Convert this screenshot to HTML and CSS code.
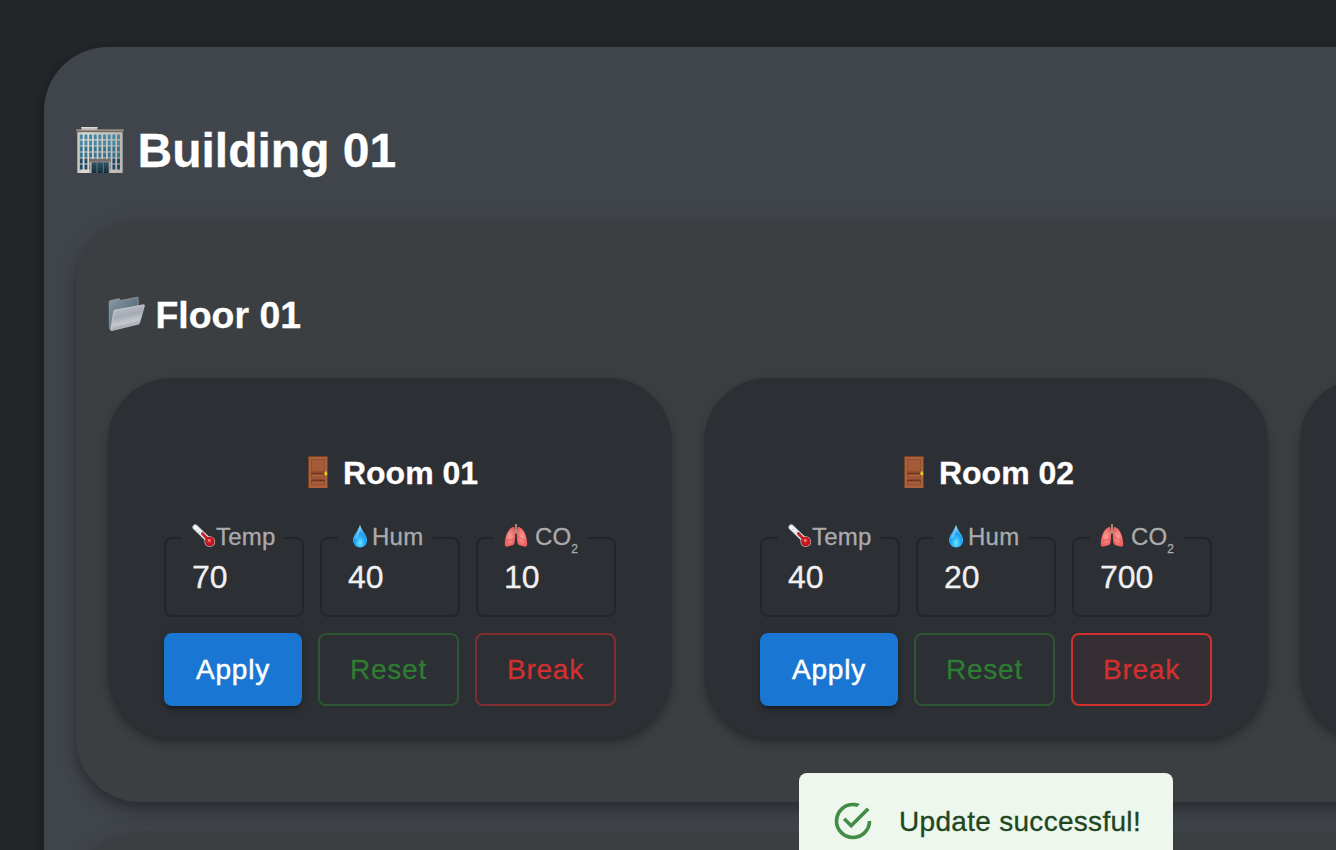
FILE: index.html
```
<!DOCTYPE html>
<html lang="en">
<head>
<meta charset="utf-8">
<title>Building 01</title>
<link rel="stylesheet" href="styles.css">
</head>
<body>
<svg class="defs" width="0" height="0" aria-hidden="true">
  <defs>
    <linearGradient id="wall" x2="1" y2="0"><stop offset="0" stop-color="#c9c5bf"/><stop offset=".15" stop-color="#dedad4"/><stop offset="1" stop-color="#bbb6b0"/></linearGradient>
    <linearGradient id="glass" x2="0" y2="1"><stop offset="0" stop-color="#2f5468"/><stop offset="1" stop-color="#172e3d"/></linearGradient>
    <linearGradient id="folder" x2=".3" y2="1"><stop offset="0" stop-color="#c5c9d0"/><stop offset=".5" stop-color="#a5abb4"/><stop offset=".75" stop-color="#c5c8ce"/><stop offset="1" stop-color="#949aa3"/></linearGradient>
    <linearGradient id="back" x2="1" y2="1"><stop offset="0" stop-color="#8a9aa7"/><stop offset="1" stop-color="#435764"/></linearGradient>
    <radialGradient id="water" cx=".5" cy=".8" r=".75"><stop offset="0" stop-color="#6fe6ff"/><stop offset=".3" stop-color="#35bdfa"/><stop offset=".55" stop-color="#1a9df2"/><stop offset="1" stop-color="#a9e3ff"/></radialGradient>
    <radialGradient id="lobe"><stop offset="0" stop-color="#ff9c96"/><stop offset="1" stop-color="#e9605f"/></radialGradient>
    <radialGradient id="bulb" cx=".45" cy=".4"><stop offset="0" stop-color="#ff6a6a"/><stop offset=".5" stop-color="#d31c25"/><stop offset="1" stop-color="#b3121c"/></radialGradient>
    <symbol id="door" viewBox="0 0 20 32">
      <rect width="20" height="32" fill="#714027"/><rect x="1" y="1" width="18" height="31" fill="#ad603c"/>
      <path d="M3.5 3.5h13v12h-13zM3.5 18h13v4h-13zM3.5 25h13v4h-13z" fill="#a65a37" stroke="#8b4c30" stroke-width=".8"/>
      <path d="M3 17.3h14M3 24.3h14" stroke="#6a3422" stroke-width="1.5"/>
      <rect x="17" y="15" width="2" height="5" fill="#c99b19"/><path d="M16.2 17.5h3" stroke="#f5d52d" stroke-width="1.8"/>
    </symbol>
    <symbol id="thermometer" viewBox="0 0 24 24">
      <path d="M3.3 3.3L16 15.5" stroke="#c5d1d6" stroke-width="5.6" stroke-linecap="round"/><path d="M3.3 3.3L16 15.5" stroke="#eff7f8" stroke-width="3.8" stroke-linecap="round"/>
      <circle cx="17.8" cy="17.5" r="5.3" fill="#dadfe2"/><circle cx="17.8" cy="17.5" r="4.8" fill="url(#bulb)"/>
      <path d="M10.3 9.5l6.5 7" stroke="#cb1a24" stroke-width="2.8" stroke-linecap="round"/>
      <path d="M4 6.5l1.5-1.5M6.5 9l1.5-1.5M9 11.5l1.3-1.3" stroke="#8da0a9" stroke-width=".8"/><circle cx="17" cy="16.4" r="1.1" fill="#ff9a97"/>
    </symbol>
    <symbol id="drop" viewBox="0 0 24 24">
      <path d="M12 .8C10.8 6.4 5 11.2 5 16.4a7.1 7.1 0 0 0 14.2 0C19.2 11.2 13.2 6.4 12 .8z" fill="url(#water)"/>
      <path d="M11.9 4C11 8 7.2 11.5 6.9 15c2.5-1 5-5 5-11z" fill="#c9efff" opacity=".45"/>
    </symbol>
    <symbol id="lungs" viewBox="0 0 24 24">
      <path d="M9.8 2.8C5 3.8 1 11 .8 19.5c0 3.3 1.2 3.6 3.8 2.7 2.8-.8 5.3-.7 5.9-3.2.8-4.5 1.3-14.8-.7-16.2z" fill="url(#lobe)"/>
      <path d="M14.2 2.8C19 3.8 23 11 23.2 19.5c0 3.3-1.2 3.6-3.8 2.7-2.8-.8-5.3-.7-5.9-3.2-.8-4.5-1.3-14.8.7-16.2z" fill="url(#lobe)"/>
      <path d="M2.3 16.5c3 .2 5-1.5 7.8-1.2M21.7 17c-3-1-5-4-7.8-4.2" fill="none" stroke="#d94d50" stroke-width=".7"/>
      <path d="M12 0v8M12 7.5l-2 2.5M12 7.5l2 2.5" fill="none" stroke="#bd8d78" stroke-width="1.8"/>
    </symbol>
  </defs>
</svg>

<main class="building">
  <h1 class="building-title">
    <svg class="icon-building" viewBox="0 0 48 48">
      <path d="M5.4 1h16v5h-16z" fill="#c6c0ba"/><path d="M5.4 1h16v1h-16z" fill="#e0dad5"/>
      <path d="M1.3 6h45.4v41H1.3z" fill="url(#wall)"/>
      <path d="M.3 4h47.2v2.2H.3z" fill="#756b67"/><path d="M.3 3.6h47.2v1H.3z" fill="#bbaea6"/>
      <g fill="none" stroke-width="4.8" stroke-dasharray="2.9 1.76">
        <path d="M3.8 10.9h41M3.8 17h41" stroke="#4587a5"/>
        <path d="M3.8 23h41M3.8 29h41" stroke="#38738f"/>
        <path d="M3.8 35h41M3.8 41h41" stroke="#1f4a62"/>
      </g>
      <path d="M13.5 33h21v14h-21z" fill="#aaa39e"/><path d="M13.5 33h21v2.7h-21z" fill="#736b68"/>
      <path d="M15.7 36.3h17v10.7h-17z" fill="url(#glass)"/><path d="M21 36v11M27.3 36v11" stroke="#6f8590" stroke-width=".8"/>
    </svg>
    <span>Building 01</span>
  </h1>

  <section class="floor">
    <h2 class="floor-title">
      <svg class="icon-folder" viewBox="0 0 38 38">
        <path d="M1.2 6.2q0-1.4 1.4-1.6l8-1.8q1-.2 1.6.6l.8 1.1L29.6 1.2q1-.1 1 1V20L4 34.4q-2.4 0-2.6-2z" fill="url(#back)" stroke="#a0adb6" stroke-width=".6"/>
        <path d="M7 14.3L36 8.8q1.2-.1.9 1.2L32 27.4q-.4 1-1.5 1.2L4.1 35q-1.6.2-1.4-1.2L5.8 15.7q.2-1.2 1.2-1.4z" fill="url(#folder)" stroke="#d8dce0" stroke-width=".6"/>
      </svg>
      <span>Floor 01</span>
    </h2>

    <div class="rooms">
      <article class="room">
        <h3 class="room-title"><svg class="icon-door"><use href="#door"/></svg><span>Room 01</span></h3>
        <div class="fields">
          <fieldset class="field temp"><legend><svg class="icon"><use href="#thermometer"/></svg>Temp</legend><div class="value">70</div></fieldset>
          <fieldset class="field"><legend><svg class="icon"><use href="#drop"/></svg>Hum</legend><div class="value">40</div></fieldset>
          <fieldset class="field"><legend><svg class="icon"><use href="#lungs"/></svg>&nbsp;CO<sub>2</sub></legend><div class="value">10</div></fieldset>
        </div>
        <div class="actions">
          <button class="btn apply">Apply</button>
          <button class="btn reset">Reset</button>
          <button class="btn break">Break</button>
        </div>
      </article>

      <article class="room">
        <h3 class="room-title"><svg class="icon-door"><use href="#door"/></svg><span>Room 02</span></h3>
        <div class="fields">
          <fieldset class="field temp"><legend><svg class="icon"><use href="#thermometer"/></svg>Temp</legend><div class="value">40</div></fieldset>
          <fieldset class="field"><legend><svg class="icon"><use href="#drop"/></svg>Hum</legend><div class="value">20</div></fieldset>
          <fieldset class="field"><legend><svg class="icon"><use href="#lungs"/></svg>&nbsp;CO<sub>2</sub></legend><div class="value">700</div></fieldset>
        </div>
        <div class="actions">
          <button class="btn apply">Apply</button>
          <button class="btn reset">Reset</button>
          <button class="btn break active">Break</button>
        </div>
      </article>

      <article class="room"></article>
    </div>
  </section>

  <section class="floor"></section>
</main>

<div class="toast" role="alert">
  <svg class="toast-icon" viewBox="0 0 24 24"><path fill="currentColor" d="M20,12A8,8 0 0,1 12,20A8,8 0 0,1 4,12A8,8 0 0,1 12,4C12.76,4 13.5,4.11 14.2,4.31L15.77,2.74C14.61,2.26 13.34,2 12,2A10,10 0 0,0 2,12A10,10 0 0,0 12,22A10,10 0 0,0 22,12M7.91,10.08L6.5,11.5L11,16L21,6L19.59,4.58L11,13.17L7.91,10.08Z"/></svg>
  <span class="toast-text">Update successful!</span>
</div>
</body>
</html>
```
FILE: styles.css
```
* { box-sizing: border-box; }

html, body { height: 100%; overflow: hidden; }

body {
  margin: 0;
  padding: 47px 0 0 44px;
  background: #23272a;
  color: #fff;
  font-family: "Liberation Sans", Arial, Helvetica, sans-serif;
  -webkit-text-stroke: .3px currentColor;
}

.defs { position: absolute; }
h1, h2, h3 { margin: 0; display: flex; align-items: center; white-space: nowrap; }

.building {
  width: 1916px;
  height: 1400px;
  padding: 75px 32px 32px;
  border-radius: 64px;
  background: #40444b;
  box-shadow: 0 6px 10px -2px rgba(0,0,0,.16), 0 10px 16px rgba(0,0,0,.12), 0 2px 28px rgba(0,0,0,.1);
}

.building-title { height: 56px; margin-bottom: 44px; gap: 13.5px; font-size: 48px; }
.icon-building { width: 48px; height: 48px; }

.floor {
  height: 580px;
  margin-bottom: 32px;
  padding: 71px 32px 64px;
  border-radius: 64px;
  background: #3b3f42;
  box-shadow: 0 6px 10px -2px rgba(0,0,0,.2), 0 10px 16px rgba(0,0,0,.14), 0 2px 24px rgba(0,0,0,.1);
}

.floor-title { height: 44px; margin-bottom: 41px; gap: 10px; font-size: 37.44px; }
.icon-folder { width: 37.5px; height: 37.5px; }

.rooms { display: flex; gap: 32px; }

.room {
  flex: 0 0 564px;
  height: 360px;
  padding: 76px 56px 32px;
  border-radius: 64px;
  background: #2c2f33;
  box-shadow: 0 6px 6px -4px rgba(0,0,0,.2), 0 6px 8px rgba(0,0,0,.14), 0 2px 16px rgba(0,0,0,.1);
}

.room-title { height: 38px; justify-content: center; gap: 15px; font-size: 32px; padding-left: 6px; }
.icon-door { width: 20px; height: 32px; margin-bottom: 2px; }

.fields { display: flex; gap: 16px; margin: 31px 0 16px; }

.field {
  flex: 0 0 140px;
  min-width: 0;
  height: 94px;
  margin: 0;
  padding: 0 0 0 16px;
  border: 2px solid #222529;
  border-radius: 8px;
}

.field legend {
  display: flex;
  align-items: center;
  height: 30px;
  padding: 0 10px 3px;
  color: #ababad;
  font-size: 24px;
  line-height: 27px;
  letter-spacing: .225px;
}

.field.temp legend { padding-right: 8px; }
.icon { width: 24px; height: 24px; flex: none; margin-bottom: 1px; }
.field sub { font-size: 12px; line-height: 12px; align-self: flex-end; margin-bottom: -5px; }
.value { padding-left: 10px; color: #f0f0f1; font-size: 32px; line-height: 48px; }

.actions { display: flex; gap: 16px; }

.btn {
  height: 73px;
  border: 2px solid;
  border-radius: 8px;
  padding: 10px 30px;
  background: transparent;
  font: 28px/49px "Liberation Sans", Arial, Helvetica, sans-serif;
  letter-spacing: .75px;
}

.apply {
  flex: 0 0 138px;
  border-color: #1976d2;
  background: #1976d2;
  color: #fff;
  -webkit-text-stroke: .5px currentColor;
  box-shadow: 0 6px 2px -4px rgba(0,0,0,.2), 0 4px 4px rgba(0,0,0,.14), 0 2px 10px rgba(0,0,0,.12);
}

.reset { flex: 0 0 141px; border-color: rgba(46,125,50,.5); color: #2e7d32; }
.break { flex: 0 0 141px; border-color: rgba(211,47,47,.5); color: #d32f2f; }
.break.active { border-color: #d32f2f; background: rgba(211,47,47,.06); }

.toast {
  position: fixed;
  left: 799px;
  top: 773px;
  width: 374px;
  height: 96px;
  display: flex;
  align-items: center;
  gap: 24px;
  padding: 0 32px;
  border-radius: 8px;
  background: #edf7ed;
  color: #1e4620;
  font-size: 28px;
  letter-spacing: .3px;
  white-space: nowrap;
}

.toast-text { padding-top: 2px; }
.toast-icon { flex: none; width: 44px; height: 44px; color: #438c47; }
```
